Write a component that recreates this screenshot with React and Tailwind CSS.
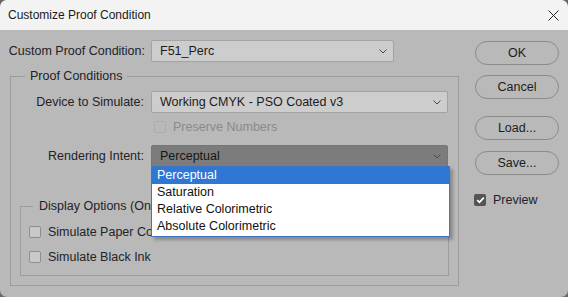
import { useState } from 'react';

const font = { fontFamily: '"Liberation Sans", Arial, sans-serif' };

function Chevron({ className = '' }) {
  return (
    <svg width="8" height="5" viewBox="0 0 8 5" className={className}>
      <path d="M0.5 0.5 L4 4 L7.5 0.5" fill="none" stroke="#4a4a4a" strokeWidth="1" />
    </svg>
  );
}

function Select({ value, width, dark = false }) {
  return (
    <div
      className={`flex h-[22px] items-center justify-between rounded-[2px] border pl-[8px] pr-[6px] ${
        dark
          ? 'border-[#3d7fe0] bg-[#7c7c7c] text-[#161616]'
          : 'border-[#a3a3a3] bg-[#cdcdcd] text-[#1c1c1c]'
      }`}
      style={{ width }}
    >
      <span>{value}</span>
      <Chevron />
    </div>
  );
}

function Checkbox({ checked = false, disabled = false }) {
  if (checked) {
    return (
      <span className="flex h-[12px] w-[12px] items-center justify-center rounded-[2px] bg-[#545454]">
        <svg width="9" height="8" viewBox="0 0 9 8">
          <path d="M1.2 4.2 L3.5 6.3 L7.8 1.6" fill="none" stroke="#ffffff" strokeWidth="1.8" />
        </svg>
      </span>
    );
  }
  return (
    <span
      className={`h-[12px] w-[12px] rounded-[2px] border ${
        disabled ? 'border-[#acacac] bg-transparent' : 'border-[#8e8e8e] bg-[#c9c9c9]'
      }`}
    />
  );
}

function DialogButton({ children, className = '' }) {
  return (
    <button
      type="button"
      className={`h-[24px] w-[84px] rounded-full border border-[#8b8b8b] text-[12.5px] text-[#1c1c1c] ${className}`}
    >
      {children}
    </button>
  );
}

export default function App() {
  const [intent] = useState('Perceptual');
  const options = ['Perceptual', 'Saturation', 'Relative Colorimetric', 'Absolute Colorimetric'];

  return (
    <div className="h-[297px] w-[568px] overflow-hidden bg-[#6f665c]" style={font}>
      <div className="flex h-full flex-col overflow-hidden rounded-[7px] bg-[#b9b9b9]">
        {/* title bar */}
        <div className="flex h-[30px] shrink-0 items-center justify-between bg-[#f3f3f3] pl-[8px] pr-[8px]">
          <span className="text-[12px] text-[#1a1a1a]">Customize Proof Condition</span>
          <svg width="11" height="11" viewBox="0 0 11 11" className="mr-[1px]">
            <path d="M0.5 0.5 L10.5 10.5 M10.5 0.5 L0.5 10.5" stroke="#222" strokeWidth="1" />
          </svg>
        </div>

        <div className="flex flex-1 pt-[10px] text-[12.5px] text-[#222228]">
          {/* left column */}
          <div className="w-[475px] shrink-0">
            <div className="flex h-[22px] items-center">
              <span className="w-[145px] text-right">Custom Proof Condition:</span>
              <div className="ml-[6px]">
                <Select value="F51_Perc" width="243px" />
              </div>
            </div>

            <fieldset className="ml-[10px] mt-[6px] w-[449px] border border-[#9c9c9c] pb-[9px] pr-[9px]">
              <legend className="ml-[14px] px-[5px] leading-[16px]">Proof Conditions</legend>

              <div className="mt-[7px] flex h-[22px] items-center">
                <span className="w-[133px] text-right">Device to Simulate:</span>
                <div className="ml-[7px]">
                  <Select value="Working CMYK - PSO Coated v3" width="297px" />
                </div>
              </div>

              <div className="ml-[143px] mt-[6px] flex h-[16px] items-center gap-[7px] text-[#8a8a8a]">
                <Checkbox disabled />
                <span>Preserve Numbers</span>
              </div>

              <div className="mt-[10px] flex h-[22px] items-center">
                <span className="w-[133px] text-right">Rendering Intent:</span>
                <div className="relative ml-[7px]">
                  <Select value={intent} width="297px" dark />
                  <ul className="absolute left-0 top-[21px] z-10 w-[299px] border border-[#3f74c4] bg-white pb-[1px] shadow-[3px_3px_3px_rgba(0,0,0,0.25)]">
                    {options.map((o) => (
                      <li
                        key={o}
                        className={`h-[17px] pl-[5px] leading-[17px] ${
                          o === intent ? 'bg-[#2f77d4] text-white' : 'text-[#111]'
                        }`}
                      >
                        {o}
                      </li>
                    ))}
                  </ul>
                </div>
              </div>

              <fieldset className="ml-[9px] mt-[31px] w-[429px] border border-[#9c9c9c] pb-[10px]">
                <legend className="ml-[12px] px-[6px] leading-[16px]">Display Options (Onscreen)</legend>
                <div className="ml-[8px] mt-[10px] flex h-[16px] items-center gap-[7px]">
                  <Checkbox />
                  <span>Simulate Paper Color</span>
                </div>
                <div className="ml-[8px] mt-[9px] flex h-[16px] items-center gap-[7px]">
                  <Checkbox />
                  <span>Simulate Black Ink</span>
                </div>
              </fieldset>
            </fieldset>
          </div>

          {/* right column */}
          <div className="flex flex-col items-start">
            <DialogButton className="mt-[1px]">OK</DialogButton>
            <DialogButton className="mt-[10px]">Cancel</DialogButton>
            <DialogButton className="mt-[17px]">Load...</DialogButton>
            <DialogButton className="mt-[11px]">Save...</DialogButton>
            <div className="ml-[-1px] mt-[17px] flex h-[16px] items-center gap-[7px]">
              <Checkbox checked />
              <span>Preview</span>
            </div>
          </div>
        </div>
      </div>
    </div>
  );
}
